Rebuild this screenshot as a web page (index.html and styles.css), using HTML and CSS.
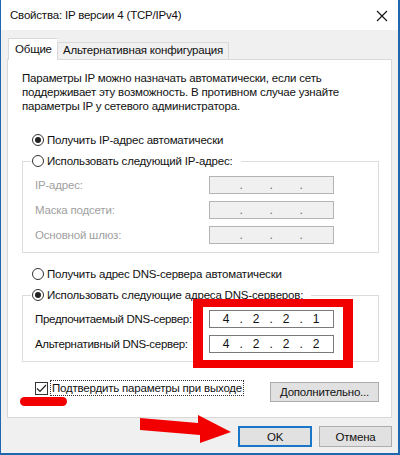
FILE: index.html
```html
<!DOCTYPE html>
<html lang="ru">
<head>
    <meta charset="UTF-8">
    <title>Свойства: IP версии 4 (TCP/IPv4)</title>
    <link rel="stylesheet" href="styles.css">
</head>
<body>
    <div class="window">
        <div class="titlebar">
            <span class="title">Свойства: IP версии 4 (TCP/IPv4)</span>
            <svg class="close" width="12" height="12" viewBox="0 0 12 12">
                <path d="M1 1 L11 11 M11 1 L1 11" stroke="#111" stroke-width="1.1" fill="none"/>
            </svg>
        </div>

        <div class="body">
            <div class="tabs">
                <div class="tab active">Общие</div>
                <div class="tab">Альтернативная конфигурация</div>
            </div>

            <div class="panel">
                <p class="intro">
                    Параметры IP можно назначать автоматически, если сеть<br>
                    поддерживает эту возможность. В противном случае узнайте<br>
                    параметры IP у сетевого администратора.
                </p>

                <div class="radio-row"><span class="radio checked"></span>Получить IP-адрес автоматически</div>

                <fieldset class="group">
                    <legend><span class="radio"></span>Использовать следующий IP-адрес:</legend>
                    <div class="field-row disabled">
                        <span class="field-label">IP-адрес:</span>
                        <div class="ip-box"><span></span><i>.</i><span></span><i>.</i><span></span><i>.</i><span></span></div>
                    </div>
                    <div class="field-row disabled">
                        <span class="field-label">Маска подсети:</span>
                        <div class="ip-box"><span></span><i>.</i><span></span><i>.</i><span></span><i>.</i><span></span></div>
                    </div>
                    <div class="field-row disabled">
                        <span class="field-label">Основной шлюз:</span>
                        <div class="ip-box"><span></span><i>.</i><span></span><i>.</i><span></span><i>.</i><span></span></div>
                    </div>
                </fieldset>

                <div class="radio-row dns-auto"><span class="radio"></span>Получить адрес DNS-сервера автоматически</div>

                <fieldset class="group">
                    <legend><span class="radio checked"></span>Использовать следующие адреса DNS-серверов:</legend>
                    <div class="field-row">
                        <span class="field-label dns">Предпочитаемый DNS-сервер:</span>
                        <div class="ip-box"><span>4</span><i>.</i><span>2</span><i>.</i><span>2</span><i>.</i><span>1</span></div>
                    </div>
                    <div class="field-row">
                        <span class="field-label dns">Альтернативный DNS-сервер:</span>
                        <div class="ip-box"><span>4</span><i>.</i><span>2</span><i>.</i><span>2</span><i>.</i><span>2</span></div>
                    </div>
                </fieldset>

                <div class="bottom-row">
                    <label class="check">
                        <span class="check-box">
                            <svg width="11" height="11" viewBox="0 0 11 11">
                                <path d="M1 5.5 L4 8.5 L10 2" stroke="#222" stroke-width="1.2" fill="none"/>
                            </svg>
                        </span>
                        <span class="check-text">Подтвердить параметры при выходе</span>
                    </label>
                    <button class="btn advanced">Дополнительно...</button>
                </div>
            </div>

            <div class="dialog-buttons">
                <button class="btn default">OK</button>
                <button class="btn">Отмена</button>
            </div>
        </div>

        <!-- красные пометки поверх окна -->
        <div class="mark-rect"></div>
        <div class="mark-line"></div>
        <svg class="mark-arrow" width="100" height="34" viewBox="0 0 100 34">
            <polygon points="0,3 58,8 58,0 91,17 60,28 60,20 0,15" fill="#f20000"/>
        </svg>
    </div>
</body>
</html>
```

FILE: styles.css
```css
* {
    box-sizing: border-box;
}
body {
    margin: 0;
    font-family: 'Segoe UI', 'Liberation Sans', Arial, sans-serif;
    font-size: 11.5px;
    letter-spacing: -0.2px;
    color: #111;
}
.window {
    position: relative;
    width: 400px;
    height: 455px;
    background-color: #f0f0f0;
    border-left: 1px solid #2167ad;
    border-right: 2px solid #2167ad;
    border-bottom: 2px solid #2167ad;
    overflow: hidden;
}
.titlebar {
    height: 30px;
    background-color: #fff;
    display: flex;
    align-items: center;
    justify-content: space-between;
    padding: 0 10px 0 9px;
}
.title {
    font-size: 11.5px;
}
.close {
    margin-top: 2px;
}
.body {
    padding: 7px 6px 0 6px;
}
.tabs {
    display: flex;
    align-items: flex-end;
    height: 22px;
    padding-left: 1px;
}
.tab {
    height: 17px;
    line-height: 15px;
    padding: 0 5px;
    border: 1px solid #d9d9d9;
    border-bottom: none;
    background-color: #f0f0f0;
}
.tab.active {
    height: 22px;
    line-height: 20px;
    width: 49px;
    padding: 0 6px;
    margin-bottom: -1px;
    background-color: #fff;
    border-right: none;
    position: relative;
    z-index: 1;
}
.panel {
    background-color: #fff;
    border: 1px solid #d9d9d9;
    padding: 11px 12px 13px 14px;
    height: 359px;
}
.intro {
    margin: 0;
    line-height: 14px;
    white-space: nowrap;
}
.radio-row {
    display: flex;
    align-items: center;
    height: 16px;
    margin: 19px 0 5px 10px;
}
.radio-row.dns-auto {
    margin-top: 13px;
}
.radio {
    width: 12px;
    height: 12px;
    border: 1px solid #333;
    border-radius: 50%;
    margin-right: 3px;
    display: flex;
    align-items: center;
    justify-content: center;
    background-color: #fff;
}
.radio.checked::after {
    content: "";
    width: 6px;
    height: 6px;
    border-radius: 50%;
    background-color: #222;
}
.group {
    margin: 0;
    border: 1px solid #dcdcdc;
    padding: 7px 0 8px 8px;
    min-width: 0;
}
.group legend {
    display: flex;
    align-items: center;
    height: 16px;
    padding: 0 8px 0 1px;
}
.field-row {
    display: flex;
    align-items: center;
    height: 18px;
    padding-left: 4px;
    margin-bottom: 7px;
}
.field-row:last-child {
    margin-bottom: 0;
}
.field-label {
    width: 174px;
    white-space: nowrap;
}
.field-label.dns {
    letter-spacing: -0.3px;
}
.ip-box {
    width: 125px;
    height: 18px;
    border: 1px solid #7a7a7a;
    background-color: #fff;
    display: grid;
    grid-template-columns: 22px 8px 22px 8px 22px 8px 22px;
    padding-left: 5px;
    align-items: center;
    line-height: 16px;
    font-size: 12px;
}
.ip-box span,
.ip-box i {
    text-align: center;
    font-style: normal;
}
.field-row.disabled .field-label {
    color: #a0a0a0;
}
.field-row.disabled .ip-box {
    background-color: #f0f0f0;
    border-color: #b4b4b4;
    color: #6d6d6d;
}
.bottom-row {
    display: flex;
    justify-content: space-between;
    align-items: flex-start;
    margin-top: 18px;
}
.check {
    display: flex;
    align-items: center;
    margin-left: 13px;
    height: 16px;
}
.check-box {
    width: 13px;
    height: 13px;
    border: 1px solid #333;
    display: flex;
    align-items: center;
    justify-content: center;
    margin-right: 2px;
}
.check-text {
    border: 1px dotted #333;
    padding: 0 1px;
    line-height: 14px;
}
.btn {
    font-family: inherit;
    font-size: 11.5px;
    letter-spacing: -0.2px;
    color: #111;
    background-color: #e1e1e1;
    border: 1px solid #adadad;
    padding: 0;
    height: 21px;
}
.btn.advanced {
    width: 109px;
    height: 20px;
    margin-top: 2px;
}
.dialog-buttons {
    display: flex;
    justify-content: flex-end;
    gap: 7px;
    margin-top: 8px;
}
.dialog-buttons .btn {
    width: 73px;
}
.btn.default {
    width: 74px;
    border: 2px solid #1a76c8;
}
.mark-rect {
    position: absolute;
    left: 192px;
    top: 299px;
    width: 160px;
    height: 69px;
    border-style: solid;
    border-color: #f20000;
    border-width: 8px 10px 8px 10px;
}
.mark-line {
    position: absolute;
    left: 19px;
    top: 397px;
    width: 47px;
    height: 9px;
    border-radius: 5px;
    background-color: #f20000;
}
.mark-arrow {
    position: absolute;
    left: 139px;
    top: 415px;
}
```
